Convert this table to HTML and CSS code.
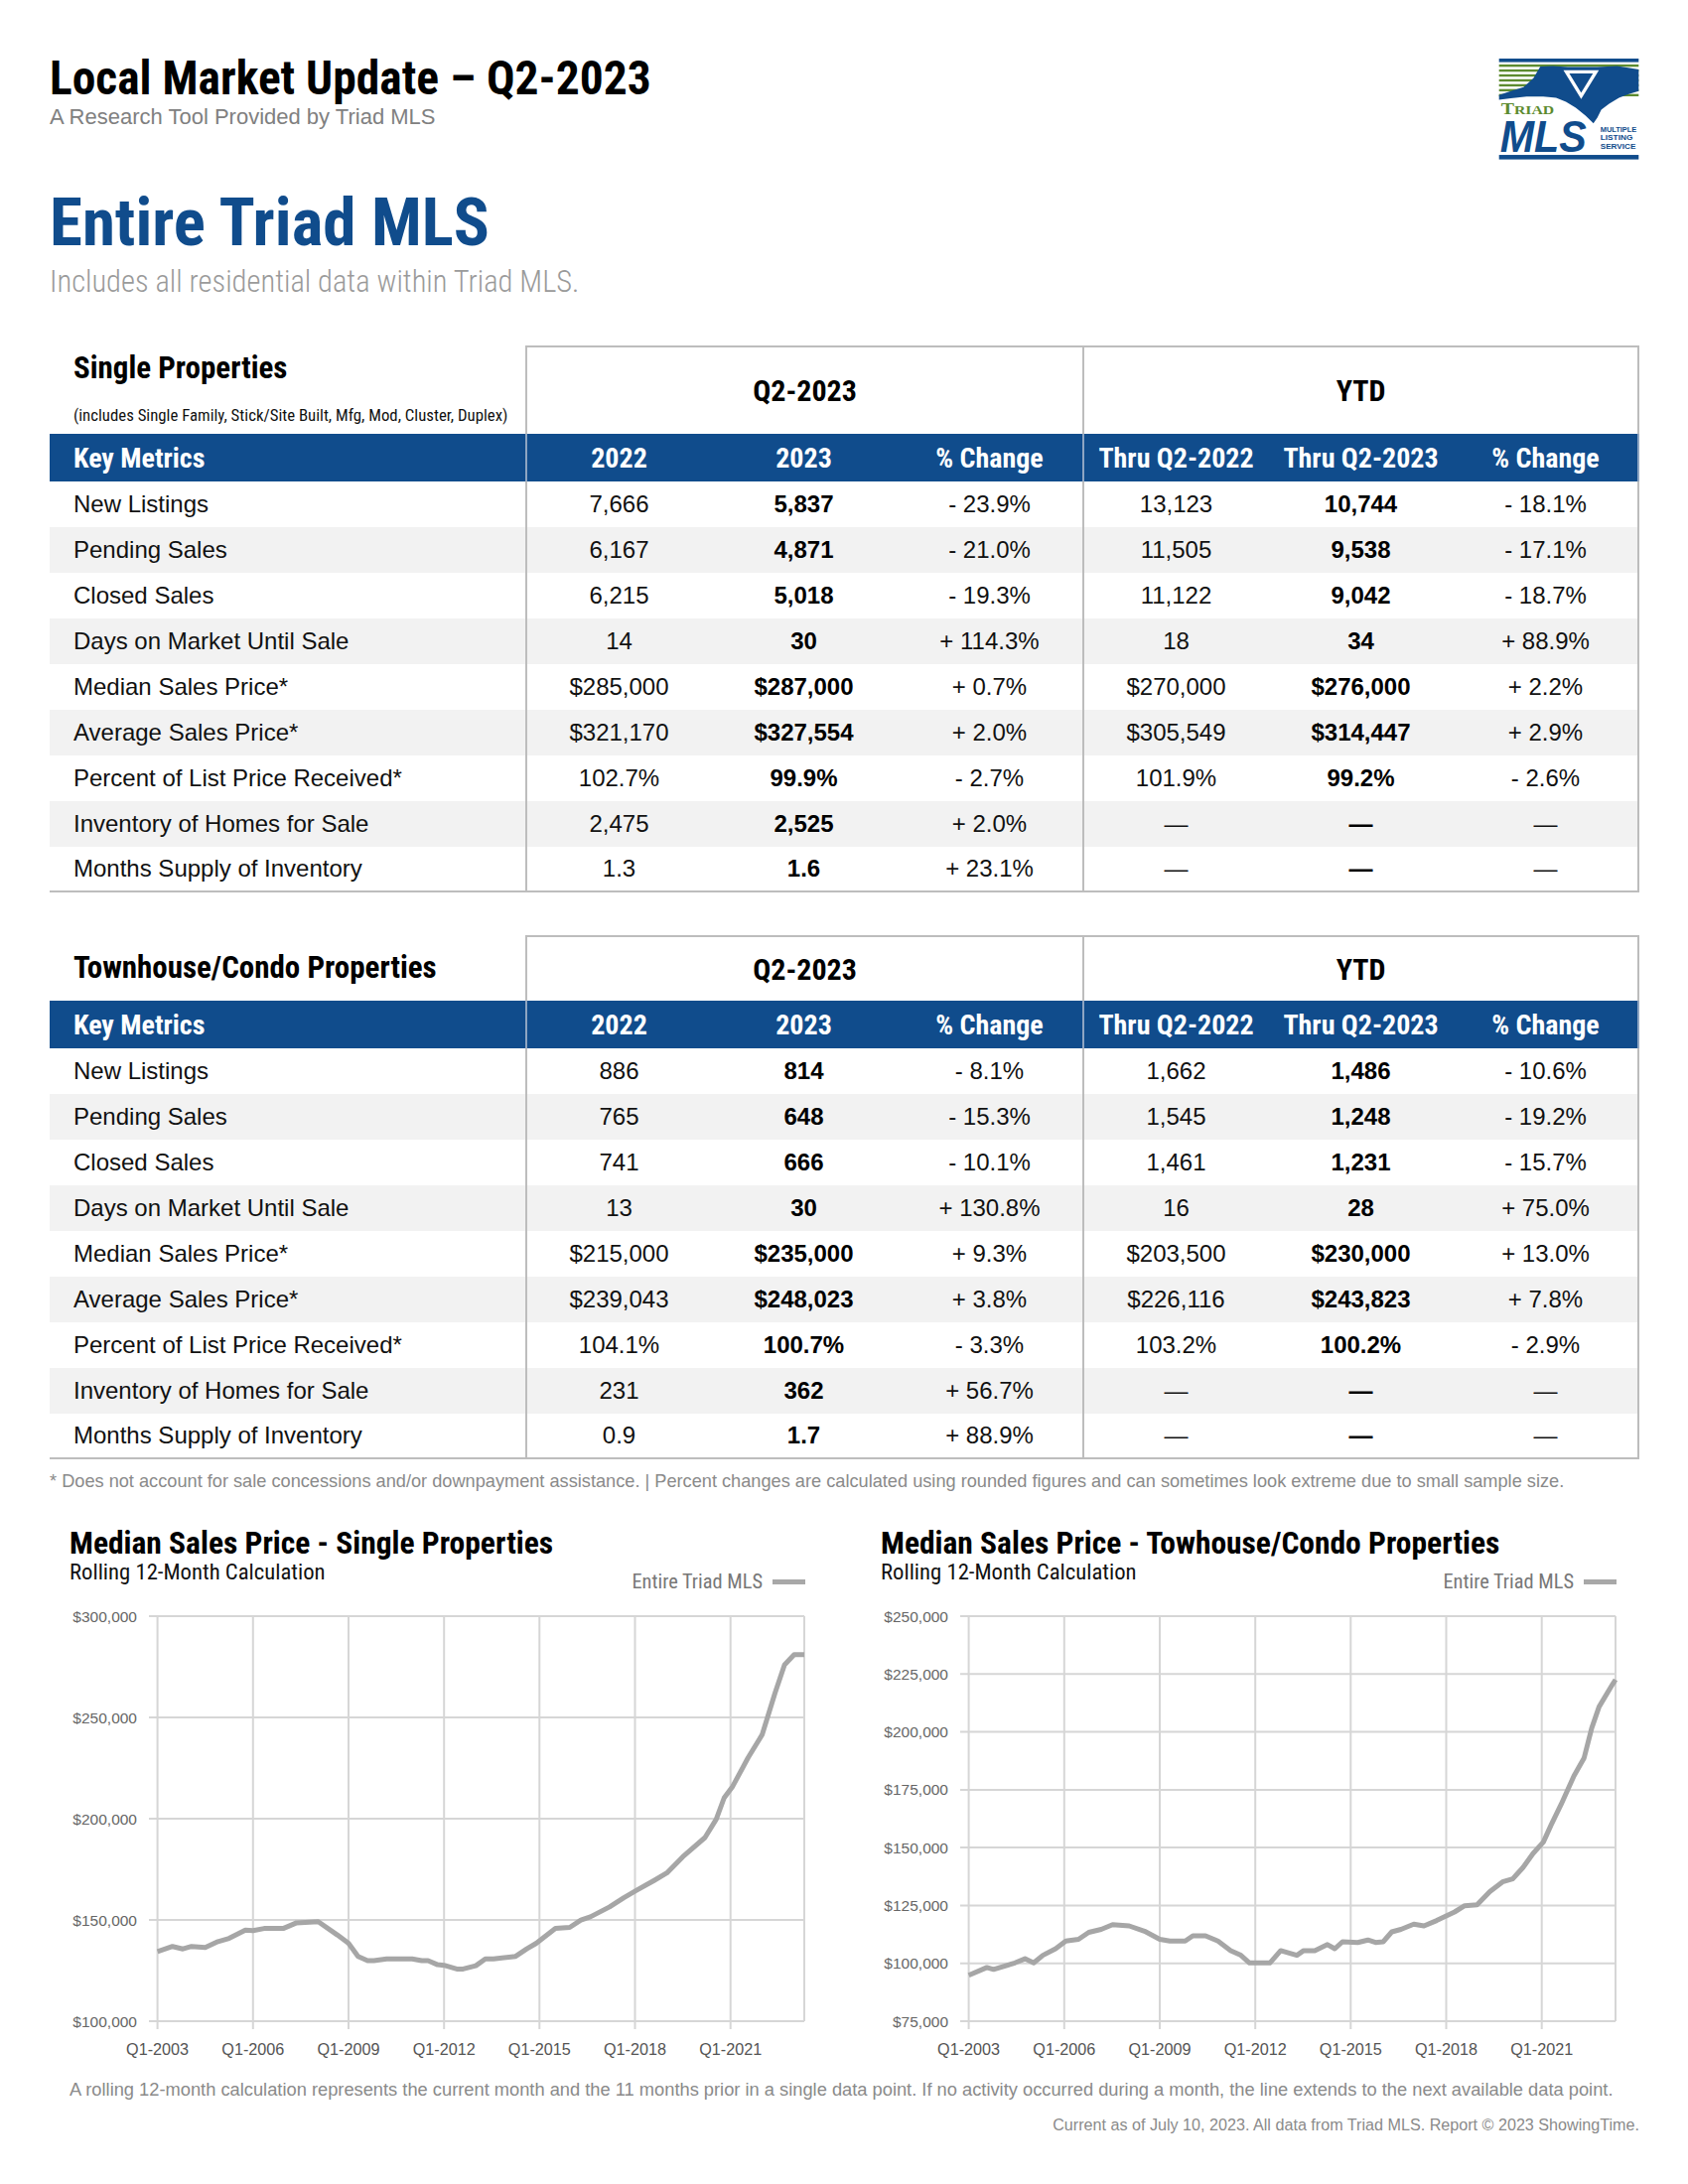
FILE: index.html
```html
<!DOCTYPE html>
<html lang="en">
<head>
<meta charset="utf-8">
<title>Local Market Update – Q2-2023</title>
<link rel="stylesheet" href="styles.css">
</head>
<body>
<div class="page">
  <header class="top">
    <div class="heading">
      <h1 class="title">Local Market Update – Q2-2023</h1>
      <p class="tagline">A Research Tool Provided by Triad MLS</p>
    </div>
    <svg class="logo" viewBox="0 0 142 103" aria-label="Triad MLS logo">
      <rect x="0" y="0" width="142" height="3.6" fill="#104c8c"/>
      <g fill="#5d8b2f">
        <rect x="0" y="6" width="142" height="2.4"/>
        <rect x="0" y="11" width="142" height="2.4"/>
        <rect x="0" y="16" width="142" height="2.4"/>
        <rect x="0" y="21" width="142" height="2.4"/>
        <rect x="0" y="26" width="142" height="2.4"/>
        <rect x="0" y="31" width="142" height="2.4"/>
        <rect x="0" y="36" width="142" height="2.4"/>
      </g>
      <polygon fill="#104c8c" points="0,37 12,33 25,29 35,20 42,8 55,7.5 70,8.5 100,8.5 120,7.5 133,9.5 142,11 142,33 132,36 122,40 112,46 104,52 100,60 96,66 88,58 78,50 68,44 58,40 45,38.5 28,38.5 12,40.5 0,42"/>
      <polygon fill="none" stroke="#fff" stroke-width="3.4" stroke-linejoin="miter" points="68.5,13.5 98.5,13.5 83.5,38"/>
      <text class="logo-triad" x="2" y="57" textLength="54" lengthAdjust="spacingAndGlyphs"><tspan font-size="17">T</tspan><tspan font-size="13.5">RIAD</tspan></text>
      <text class="logo-mls" x="1" y="95" textLength="88" lengthAdjust="spacingAndGlyphs">MLS</text>
      <text class="logo-small" x="103" y="74.5" textLength="37" lengthAdjust="spacingAndGlyphs">MULTIPLE</text>
      <text class="logo-small" x="103" y="83" textLength="33" lengthAdjust="spacingAndGlyphs">LISTING</text>
      <text class="logo-small" x="103" y="91.5" textLength="36" lengthAdjust="spacingAndGlyphs">SERVICE</text>
      <rect x="0" y="98" width="142" height="4.6" fill="#104c8c"/>
    </svg>
  </header>

  <h2 class="area">Entire Triad MLS</h2>
  <p class="area-note">Includes all residential data within Triad MLS.</p>

  <section class="mtable t1">
    <div class="row head">
      <div class="tname">
        <div class="tname-main">Single Properties</div>
        <div class="tname-sub">(includes Single Family, Stick/Site Built, Mfg, Mod, Cluster, Duplex)</div>
      </div>
      <div class="grp g1">Q2-2023</div>
      <div class="grp g2">YTD</div>
    </div>
    <div class="row bar">
      <div class="c lab">Key Metrics</div><div class="c d1">2022</div><div class="c">2023</div><div class="c">% Change</div><div class="c d2">Thru Q2-2022</div><div class="c">Thru Q2-2023</div><div class="c d3">% Change</div>
    </div>
    <div class="row"><div class="c lab">New Listings</div><div class="c d1">7,666</div><div class="c b">5,837</div><div class="c">- 23.9%</div><div class="c d2">13,123</div><div class="c b">10,744</div><div class="c d3">- 18.1%</div></div>
    <div class="row alt"><div class="c lab">Pending Sales</div><div class="c d1">6,167</div><div class="c b">4,871</div><div class="c">- 21.0%</div><div class="c d2">11,505</div><div class="c b">9,538</div><div class="c d3">- 17.1%</div></div>
    <div class="row"><div class="c lab">Closed Sales</div><div class="c d1">6,215</div><div class="c b">5,018</div><div class="c">- 19.3%</div><div class="c d2">11,122</div><div class="c b">9,042</div><div class="c d3">- 18.7%</div></div>
    <div class="row alt"><div class="c lab">Days on Market Until Sale</div><div class="c d1">14</div><div class="c b">30</div><div class="c">+ 114.3%</div><div class="c d2">18</div><div class="c b">34</div><div class="c d3">+ 88.9%</div></div>
    <div class="row"><div class="c lab">Median Sales Price*</div><div class="c d1">$285,000</div><div class="c b">$287,000</div><div class="c">+ 0.7%</div><div class="c d2">$270,000</div><div class="c b">$276,000</div><div class="c d3">+ 2.2%</div></div>
    <div class="row alt"><div class="c lab">Average Sales Price*</div><div class="c d1">$321,170</div><div class="c b">$327,554</div><div class="c">+ 2.0%</div><div class="c d2">$305,549</div><div class="c b">$314,447</div><div class="c d3">+ 2.9%</div></div>
    <div class="row"><div class="c lab">Percent of List Price Received*</div><div class="c d1">102.7%</div><div class="c b">99.9%</div><div class="c">- 2.7%</div><div class="c d2">101.9%</div><div class="c b">99.2%</div><div class="c d3">- 2.6%</div></div>
    <div class="row alt"><div class="c lab">Inventory of Homes for Sale</div><div class="c d1">2,475</div><div class="c b">2,525</div><div class="c">+ 2.0%</div><div class="c d2">—</div><div class="c b">—</div><div class="c d3">—</div></div>
    <div class="row last"><div class="c lab">Months Supply of Inventory</div><div class="c d1">1.3</div><div class="c b">1.6</div><div class="c">+ 23.1%</div><div class="c d2">—</div><div class="c b">—</div><div class="c d3">—</div></div>
  </section>

  <section class="mtable t2">
    <div class="row head">
      <div class="tname">
        <div class="tname-main">Townhouse/Condo Properties</div>
      </div>
      <div class="grp g1">Q2-2023</div>
      <div class="grp g2">YTD</div>
    </div>
    <div class="row bar">
      <div class="c lab">Key Metrics</div><div class="c d1">2022</div><div class="c">2023</div><div class="c">% Change</div><div class="c d2">Thru Q2-2022</div><div class="c">Thru Q2-2023</div><div class="c d3">% Change</div>
    </div>
    <div class="row"><div class="c lab">New Listings</div><div class="c d1">886</div><div class="c b">814</div><div class="c">- 8.1%</div><div class="c d2">1,662</div><div class="c b">1,486</div><div class="c d3">- 10.6%</div></div>
    <div class="row alt"><div class="c lab">Pending Sales</div><div class="c d1">765</div><div class="c b">648</div><div class="c">- 15.3%</div><div class="c d2">1,545</div><div class="c b">1,248</div><div class="c d3">- 19.2%</div></div>
    <div class="row"><div class="c lab">Closed Sales</div><div class="c d1">741</div><div class="c b">666</div><div class="c">- 10.1%</div><div class="c d2">1,461</div><div class="c b">1,231</div><div class="c d3">- 15.7%</div></div>
    <div class="row alt"><div class="c lab">Days on Market Until Sale</div><div class="c d1">13</div><div class="c b">30</div><div class="c">+ 130.8%</div><div class="c d2">16</div><div class="c b">28</div><div class="c d3">+ 75.0%</div></div>
    <div class="row"><div class="c lab">Median Sales Price*</div><div class="c d1">$215,000</div><div class="c b">$235,000</div><div class="c">+ 9.3%</div><div class="c d2">$203,500</div><div class="c b">$230,000</div><div class="c d3">+ 13.0%</div></div>
    <div class="row alt"><div class="c lab">Average Sales Price*</div><div class="c d1">$239,043</div><div class="c b">$248,023</div><div class="c">+ 3.8%</div><div class="c d2">$226,116</div><div class="c b">$243,823</div><div class="c d3">+ 7.8%</div></div>
    <div class="row"><div class="c lab">Percent of List Price Received*</div><div class="c d1">104.1%</div><div class="c b">100.7%</div><div class="c">- 3.3%</div><div class="c d2">103.2%</div><div class="c b">100.2%</div><div class="c d3">- 2.9%</div></div>
    <div class="row alt"><div class="c lab">Inventory of Homes for Sale</div><div class="c d1">231</div><div class="c b">362</div><div class="c">+ 56.7%</div><div class="c d2">—</div><div class="c b">—</div><div class="c d3">—</div></div>
    <div class="row last"><div class="c lab">Months Supply of Inventory</div><div class="c d1">0.9</div><div class="c b">1.7</div><div class="c">+ 88.9%</div><div class="c d2">—</div><div class="c b">—</div><div class="c d3">—</div></div>
  </section>

  <p class="footnote">* Does not account for sale concessions and/or downpayment assistance. | Percent changes are calculated using rounded figures and can sometimes look extreme due to small sample size.</p>

  <section class="charts">
    <div class="chart">
      <div class="chart-head">
        <h3 class="chart-title">Median Sales Price - Single Properties</h3>
        <p class="chart-sub">Rolling 12-Month Calculation</p>
        <div class="legend"><span>Entire Triad MLS</span><span class="swatch"></span></div>
      </div>
      <svg class="plot" viewBox="0 0 770 485">
        <g transform="translate(0,13)">
          <g class="grid">
            <line x1="100" y1="19" x2="760" y2="19"/>
            <line x1="100" y1="121" x2="760" y2="121"/>
            <line x1="100" y1="223" x2="760" y2="223"/>
            <line x1="100" y1="325" x2="760" y2="325"/>
            <line x1="100" y1="427" x2="760" y2="427"/>
            <line x1="108.6" y1="19" x2="108.6" y2="435"/>
            <line x1="204.8" y1="19" x2="204.8" y2="435"/>
            <line x1="301" y1="19" x2="301" y2="435"/>
            <line x1="397.2" y1="19" x2="397.2" y2="435"/>
            <line x1="493.3" y1="19" x2="493.3" y2="435"/>
            <line x1="589.5" y1="19" x2="589.5" y2="435"/>
            <line x1="685.7" y1="19" x2="685.7" y2="435"/>
            <line x1="760" y1="19" x2="760" y2="427"/>
          </g>
          <g class="ylab">
            <text x="88" y="24.5">$300,000</text>
            <text x="88" y="126.5">$250,000</text>
            <text x="88" y="228.5">$200,000</text>
            <text x="88" y="330.5">$150,000</text>
            <text x="88" y="432.5">$100,000</text>
          </g>
          <g class="xlab">
            <text x="108.6" y="461">Q1-2003</text>
            <text x="204.8" y="461">Q1-2006</text>
            <text x="301" y="461">Q1-2009</text>
            <text x="397.2" y="461">Q1-2012</text>
            <text x="493.3" y="461">Q1-2015</text>
            <text x="589.5" y="461">Q1-2018</text>
            <text x="685.7" y="461">Q1-2021</text>
          </g>
          <polyline class="series" points="108.6,356.8 123.7,351.7 134.2,354.2 142.9,351.7 156.7,352.7 169.5,346.8 180.7,343.6 197.1,335.2 204.8,335.8 216,333.6 235.2,333.6 248.7,327.9 270.5,326.8 289.7,340.1 301,348.5 310.6,361.7 320.2,366 326.6,366 339.4,364.2 365.1,364.2 374.7,366 381.1,366 390.7,370.1 397.2,370.7 410,374.4 416.4,374.4 429.2,371.1 438.8,364.2 446.9,364.2 469.3,361.7 480.5,354.2 490.1,348.5 509.4,333.6 523.8,332.5 535,325.2 544.6,321.9 563.9,311.9 578.3,302.6 591.1,295.2 608.8,285.2 621.6,277.7 637.6,261.4 660,242 671.3,223.6 679.3,202 687.9,190.4 703.3,161.8 717.7,138.1 730.5,96.5 740.1,68 749.8,57.8 760,57.8"/>
        </g>
      </svg>
    </div>
    <div class="chart">
      <div class="chart-head">
        <h3 class="chart-title">Median Sales Price - Towhouse/Condo Properties</h3>
        <p class="chart-sub">Rolling 12-Month Calculation</p>
        <div class="legend"><span>Entire Triad MLS</span><span class="swatch"></span></div>
      </div>
      <svg class="plot" viewBox="0 0 770 485">
        <g transform="translate(0,13)">
          <g class="grid">
            <line x1="100" y1="19" x2="760" y2="19"/>
            <line x1="100" y1="77.3" x2="760" y2="77.3"/>
            <line x1="100" y1="135.6" x2="760" y2="135.6"/>
            <line x1="100" y1="193.9" x2="760" y2="193.9"/>
            <line x1="100" y1="252.1" x2="760" y2="252.1"/>
            <line x1="100" y1="310.4" x2="760" y2="310.4"/>
            <line x1="100" y1="368.7" x2="760" y2="368.7"/>
            <line x1="100" y1="427" x2="760" y2="427"/>
            <line x1="108.6" y1="19" x2="108.6" y2="435"/>
            <line x1="204.8" y1="19" x2="204.8" y2="435"/>
            <line x1="301" y1="19" x2="301" y2="435"/>
            <line x1="397.2" y1="19" x2="397.2" y2="435"/>
            <line x1="493.3" y1="19" x2="493.3" y2="435"/>
            <line x1="589.5" y1="19" x2="589.5" y2="435"/>
            <line x1="685.7" y1="19" x2="685.7" y2="435"/>
            <line x1="760" y1="19" x2="760" y2="427"/>
          </g>
          <g class="ylab">
            <text x="88" y="24.5">$250,000</text>
            <text x="88" y="82.8">$225,000</text>
            <text x="88" y="141.1">$200,000</text>
            <text x="88" y="199.4">$175,000</text>
            <text x="88" y="257.6">$150,000</text>
            <text x="88" y="315.9">$125,000</text>
            <text x="88" y="374.2">$100,000</text>
            <text x="88" y="432.5">$75,000</text>
          </g>
          <g class="xlab">
            <text x="108.6" y="461">Q1-2003</text>
            <text x="204.8" y="461">Q1-2006</text>
            <text x="301" y="461">Q1-2009</text>
            <text x="397.2" y="461">Q1-2012</text>
            <text x="493.3" y="461">Q1-2015</text>
            <text x="589.5" y="461">Q1-2018</text>
            <text x="685.7" y="461">Q1-2021</text>
          </g>
          <polyline class="series" points="108.6,380.8 126.9,372.9 133.6,374.8 155.1,368.3 165.3,364.1 174,368.3 183.3,360.6 196.1,354 206.4,346.3 219.2,344.5 229.5,337.5 242,334.5 253.5,329.8 270.2,331 285.6,336.3 301,344.5 311.2,346.3 326.6,346.3 334.3,341 347.1,341 359.6,346.3 372.5,355.9 382.7,360.6 391.4,368.3 411.9,368.3 422.8,355.9 439.1,360.6 445.9,355.9 457.1,355.9 469.9,349.8 477.3,354 485,347 500.4,347.7 510.6,345.2 518.3,347.7 526,347 534.7,337 543.9,334.5 556.8,329.3 567.1,331 579.9,325.6 597.9,317 608.1,310.7 620.6,309.8 633.4,296.5 646.2,286.7 656.5,283.6 666.8,272.2 677,258 687.3,246.6 695,229.6 705.3,208.4 718.1,179.9 728.3,162 736,131.9 743.4,110.4 757.2,87.3 760,83"/>
        </g>
      </svg>
    </div>
  </section>

  <p class="rolling">A rolling 12-month calculation represents the current month and the 11 months prior in a single data point. If no activity occurred during a month, the line extends to the next available data point.</p>
  <p class="current">Current as of July 10, 2023. All data from Triad MLS. Report © 2023 ShowingTime.</p>
</div>
</body>
</html>
```

FILE: styles.css
```css
:root {
  --sans: "Liberation Sans", Arial, sans-serif;
  --cond: "Roboto", "Liberation Sans", sans-serif;
  --blue: #104c8c;
  --rule: #bdbdbd;
}

* {
  box-sizing: border-box;
  margin: 0;
  padding: 0;
}

body {
  width: 1700px;
  background: #fff;
  color: #111;
  font-family: var(--sans);
}

.title,
.area,
.area-note,
.tname-main,
.tname-sub,
.grp,
.row.bar .c,
.chart-title,
.chart-sub,
.legend {
  font-family: var(--cond);
  font-stretch: 75%;
}

.page {
  padding: 53px 49px 0 50px;
}

/* header */
.top {
  display: flex;
  justify-content: space-between;
  align-items: flex-start;
}

.title {
  font-size: 47.5px;
  font-weight: 700;
  line-height: 53px;
  color: #000;
}

.tagline {
  font-size: 22px;
  line-height: 24px;
  color: #808080;
}

.logo {
  display: block;
  width: 142px;
  height: 102px;
  margin-top: 6px;
}

.logo-triad {
  font-family: "Liberation Serif", serif;
  font-weight: 700;
  fill: #5d8b2f;
}

.logo-mls {
  font-family: "Liberation Sans", sans-serif;
  font-weight: 700;
  font-style: italic;
  font-size: 44px;
  fill: #104c8c;
}

.logo-small {
  font-family: "Liberation Sans", sans-serif;
  font-weight: 700;
  font-size: 8px;
  fill: #104c8c;
}

.area {
  margin-top: 30px;
  font-size: 67px;
  font-weight: 700;
  line-height: 1;
  color: var(--blue);
}

.area-note {
  margin-top: 8px;
  font-size: 30.5px;
  font-weight: 300;
  line-height: 36px;
  color: #9a9a9a;
}

/* metric tables */
.mtable.t1 {
  margin-top: 46px;
}

.mtable.t2 {
  margin-top: 43px;
}

.row {
  display: grid;
  grid-template-columns: 479px repeat(6, 1fr);
  height: 46px;
}

.row.alt {
  background: #f2f2f2;
}

.row.last {
  border-bottom: 2px solid var(--rule);
}

.row.head {
  height: 89px;
}

.t2 .row.head {
  height: 66px;
}

.tname {
  padding: 5px 0 0 24px;
}

.t2 .tname {
  display: flex;
  align-items: center;
  padding-top: 0;
}

.tname-main {
  font-size: 31px;
  font-weight: 700;
  line-height: 36px;
  color: #000;
}

.tname-sub {
  margin-top: 19px;
  font-size: 16.8px;
  line-height: 20px;
  color: #111;
}

.grp {
  display: flex;
  align-items: center;
  justify-content: center;
  font-size: 30px;
  font-weight: 700;
  color: #000;
  border-top: 2px solid var(--rule);
  border-left: 2px solid var(--rule);
}

.grp.g1 {
  grid-column: 2 / span 3;
}

.grp.g2 {
  grid-column: 5 / span 3;
  border-right: 2px solid var(--rule);
}

.c {
  display: flex;
  align-items: center;
  justify-content: center;
  font-size: 24px;
  color: #111;
  white-space: nowrap;
}

.c.lab {
  justify-content: flex-start;
  padding-left: 24px;
}

.c.b {
  font-weight: 700;
  color: #000;
}

.c.d1,
.c.d2 {
  border-left: 2px solid var(--rule);
}

.c.d3 {
  border-right: 2px solid var(--rule);
}

.row.bar {
  height: 48px;
  background: var(--blue);
}

.row.bar .c {
  font-size: 28px;
  font-weight: 700;
  color: #fff;
}

.row.bar .c.d1,
.row.bar .c.d2 {
  border-left-color: #8ea5c2;
}

.row.bar .c.d3 {
  border-right-color: #8ea5c2;
}

.footnote {
  margin-top: 12px;
  font-size: 18.2px;
  line-height: 20px;
  color: #8a8a8a;
  white-space: nowrap;
}

/* charts */
.charts {
  display: grid;
  grid-template-columns: 817px 1fr;
  margin-top: 36px;
}

.chart {
  width: 770px;
}

.chart-head {
  display: grid;
  grid-template-columns: 1fr auto;
  padding-left: 20px;
  padding-right: 9px;
}

.chart-title {
  grid-column: 1 / -1;
  font-size: 31.5px;
  font-weight: 700;
  line-height: 34px;
  color: #000;
  white-space: nowrap;
}

.chart-sub {
  font-size: 22.7px;
  line-height: 24px;
  color: #111;
}

.legend {
  display: flex;
  align-items: center;
  gap: 10px;
  align-self: end;
  justify-self: end;
  margin-bottom: -8px;
  font-size: 20.4px;
  line-height: 22px;
  color: #777;
  white-space: nowrap;
}

.swatch {
  width: 33px;
  height: 5px;
  background: #a8a8a8;
}

.plot {
  display: block;
  width: 770px;
  height: 485px;
}

.grid line {
  stroke: #d6d6d6;
  stroke-width: 2;
}

.ylab text {
  font-family: var(--sans);
  font-size: 15.5px;
  fill: #666;
  text-anchor: end;
}

.xlab text {
  font-family: var(--sans);
  font-size: 16.2px;
  fill: #555;
  text-anchor: middle;
}

.series {
  fill: none;
  stroke: #a6a6a6;
  stroke-width: 5;
  stroke-linejoin: round;
}

.rolling {
  margin-top: 14px;
  padding-left: 20px;
  font-size: 18.3px;
  line-height: 20px;
  color: #8a8a8a;
  white-space: nowrap;
}

.current {
  margin-top: 16px;
  text-align: right;
  font-size: 16.15px;
  line-height: 18px;
  color: #8a8a8a;
}
```
